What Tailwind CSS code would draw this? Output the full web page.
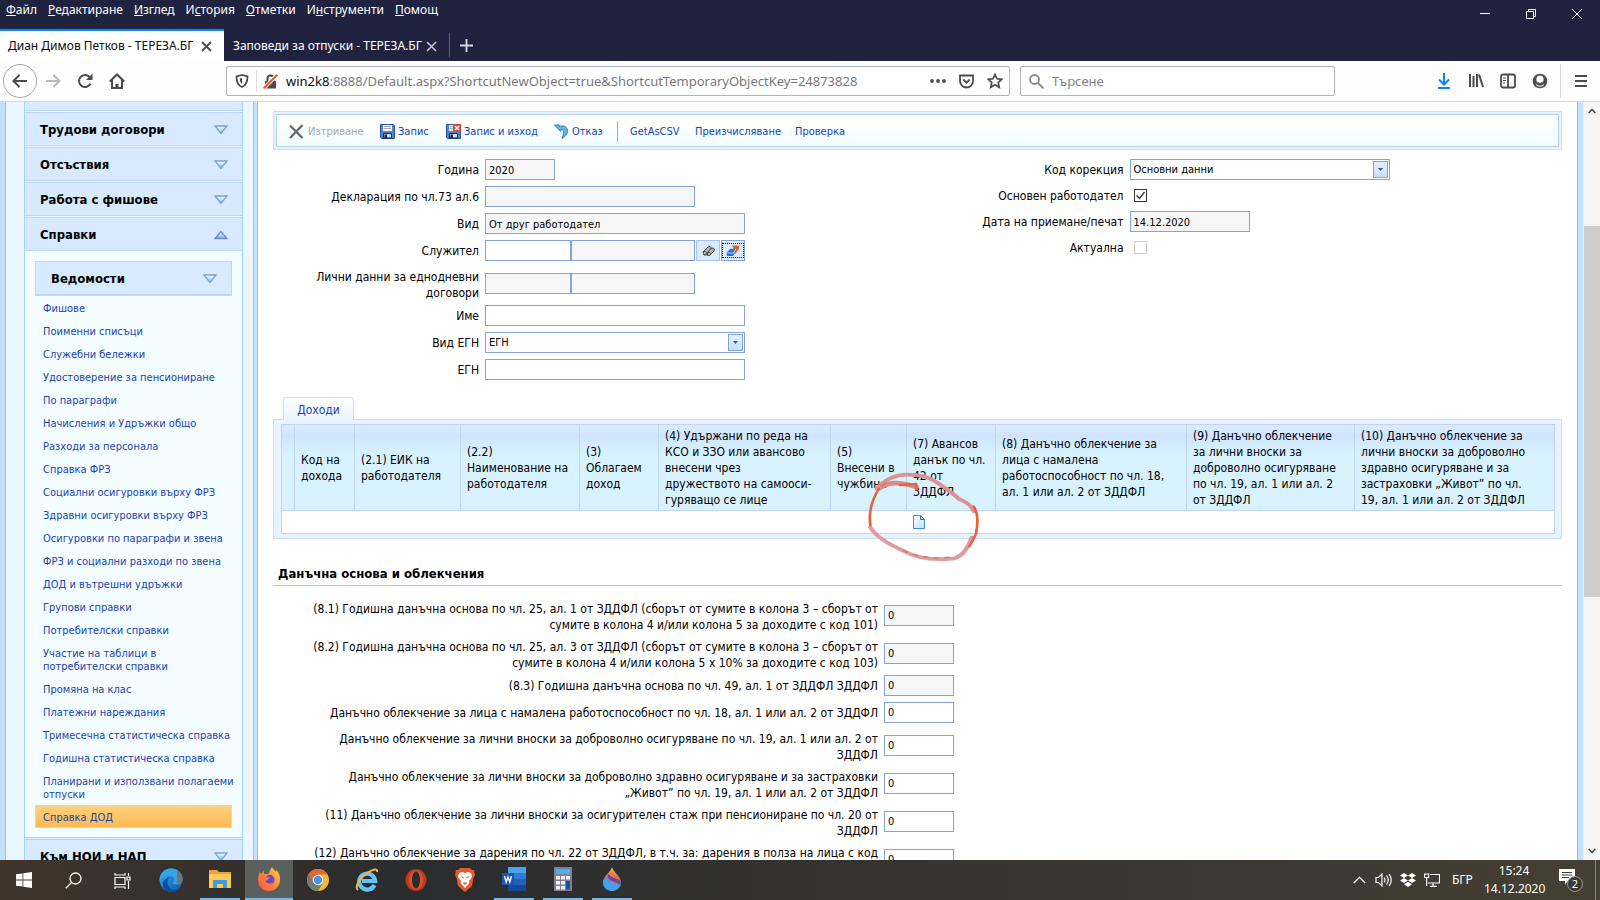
<!DOCTYPE html>
<html lang="bg">
<head>
<meta charset="utf-8">
<title>Диан Димов Петков - ТЕРЕЗА.БГ</title>
<script src="https://cdn.jsdelivr.net/npm/@tailwindcss/browser@4"></script>
</head>
<body class="flex h-screen flex-col overflow-hidden bg-white font-['DejaVu_Sans_Condensed','DejaVu_Sans',sans-serif] text-black">

<!-- Shared gradient and glyph definitions -->
<svg class="absolute size-0" aria-hidden="true">
  <defs>
    <linearGradient id="tri" x1="0" y1="0" x2="0" y2="1"><stop offset="0" stop-color="#fff"/><stop offset="1" stop-color="#6cbcf0"/></linearGradient>
    <linearGradient id="page" x1="0" y1="0" x2="1" y2="1"><stop offset="0" stop-color="#fff"/><stop offset="1" stop-color="#bfe0fa"/></linearGradient>
    <linearGradient id="edge" x1="0" y1="0" x2="1" y2="1"><stop offset="0" stop-color="#35b5ee"/><stop offset="1" stop-color="#0c50a8"/></linearGradient>
    <linearGradient id="drop" x1="0" y1="0" x2="0" y2="1"><stop offset="0" stop-color="#ffb050"/><stop offset=".5" stop-color="#e8604c"/><stop offset="1" stop-color="#d84858"/></linearGradient>
    <linearGradient id="fox" x1="1" y1="0" x2="0" y2="1"><stop offset="0" stop-color="#ffd54a"/><stop offset=".5" stop-color="#ff8a3c"/><stop offset="1" stop-color="#f0504c"/></linearGradient>
    <symbol id="down" viewBox="0 0 14 10"><path d="M1 1h12L7 8.500z" fill="url(#tri)" stroke="#7f9fd4" stroke-width="1.300"/></symbol>
    <symbol id="up" viewBox="0 0 14 10"><path d="M1 8.500h12L7 1.500z" fill="url(#tri)" stroke="#6f86c4" stroke-width="1.300"/></symbol>
    <symbol id="floppy" viewBox="0 0 15 15"><path d="M.5.5h13l1 1v13H1.500l-1-1z" fill="#4f86d0" stroke="#2c54a0"/><path d="M3 1h9v6H3z" fill="#f4f4f4"/><path d="M4 2.500h7M4 4.500h7" stroke="#a8a8b0"/><path d="M3.500 9.500h8V14h-8z" fill="#d4dcec" stroke="#223"/><path d="M4.500 10.500H7V14H4.500z" fill="#223"/></symbol>
  </defs>
</svg>

<!-- Browser chrome -->
<header class="shrink-0 font-['Noto_Sans','Open_Sans',sans-serif] text-xs">
  <div class="flex h-[61px] flex-col justify-between bg-[#202340] text-white">
    <div class="flex h-[29px] items-start justify-between">
      <nav class="flex gap-[11px] pl-[6px] pt-[1px] leading-[18px]" aria-label="Меню">
        <button><u>Ф</u>айл</button><button><u>Р</u>едактиране</button><button><u>И</u>зглед</button><button>И<u>с</u>тория</button><button><u>О</u>тметки</button><button>И<u>н</u>струменти</button><button><u>П</u>омощ</button>
      </nav>
      <div class="flex w-[138px] justify-around pt-2">
        <button aria-label="Минимизиране"><svg class="size-3" viewBox="0 0 12 12"><path d="M1 5.500h10" stroke="#fff"/></svg></button>
        <button aria-label="Възстановяване"><svg class="size-3" viewBox="0 0 12 12" fill="none" stroke="#fff"><path d="M1.500 3.500h7v7h-7zM3.500 3.500v-2h7v7h-2"/></svg></button>
        <button aria-label="Затваряне"><svg class="size-3" viewBox="0 0 12 12"><path d="M1 1l10 10M11 1L1 11" stroke="#fff"/></svg></button>
      </div>
    </div>
    <div class="flex h-8 items-center" role="tablist">
      <button role="tab" aria-selected="true" class="flex h-8 w-[224px] items-center justify-between border-t-2 border-[#0a84ff] bg-white pl-2 pr-3 text-[#0c0c0d]">Диан Димов Петков - ТЕРЕЗА.БГ
        <svg class="size-[11px]" viewBox="0 0 11 11"><path d="M1 1l9 9M10 1L1 10" stroke="#4a4a4f" stroke-width="1.800"/></svg></button>
      <button role="tab" aria-selected="false" class="flex h-8 w-[225px] items-center justify-between border-t-2 border-transparent pl-[9px] pr-3">Заповеди за отпуски - ТЕРЕЗА.БГ
        <svg class="size-[11px]" viewBox="0 0 11 11"><path d="M1 1l9 9M10 1L1 10" stroke="#c4c4cc" stroke-width="1.600"/></svg></button>
      <div class="h-6 w-px bg-[#5d5f74]"></div>
      <button class="pl-[9px]" aria-label="Нов раздел"><svg class="size-[15px]" viewBox="0 0 15 15"><path d="M7.500 1v13M1 7.500h13" stroke="#d8d8e0" stroke-width="1.800"/></svg></button>
    </div>
  </div>
  <div class="flex h-[41px] items-center border-b border-[#d8d8dc] bg-[#fdfdfd] text-[#4a4a4f]">
    <div class="flex w-[226px] items-center pl-[3px]">
      <button aria-label="Назад" class="flex size-[34px] items-center justify-center rounded-full border border-[#a8a8ac]"><svg class="size-4" viewBox="0 0 16 16" fill="none" stroke="currentColor" stroke-width="2"><path d="M15 8H2M7.500 2L1.500 8l6 6"/></svg></button>
      <button aria-label="Напред" class="ml-2"><svg class="size-4" viewBox="0 0 16 16" fill="none" stroke="#b8b8bb" stroke-width="2"><path d="M1 8h13M8.500 2l6 6-6 6"/></svg></button>
      <button aria-label="Презареждане" class="ml-4"><svg class="size-4" viewBox="0 0 16 16" fill="none" stroke="currentColor" stroke-width="2"><path d="M13.500 10.500A6 6 0 1 1 12.500 4L14 6"/><path d="M15.500.5v6.500H9z" fill="currentColor" stroke="none"/></svg></button>
      <button aria-label="Начало" class="ml-4"><svg class="size-4" viewBox="0 0 16 16" fill="none" stroke="currentColor" stroke-width="2"><path d="M.8 8.500L8 1.500l7.200 7M3 7v8h10V7"/><path d="M8 15v-4" stroke-width="3"/></svg></button>
    </div>
    <div class="flex h-[30px] min-w-0 basis-[784px] items-center rounded-[2px] border border-[#b4b4b8] bg-white pl-2 pr-[6px]">
      <svg class="size-[14px] shrink-0" viewBox="0 0 14 14" fill="none" stroke="currentColor"><path d="M7 1L1.500 2.500C1.500 8 3 11.500 7 13c4-1.500 5.500-5 5.500-10.500z" stroke-width="1.800"/><path d="M7 4v6C5.500 9 4.700 7 4.700 4.500z" fill="currentColor" stroke="none"/></svg>
      <div class="ml-[7px] h-[22px] w-px bg-[#dedee2]"></div>
      <svg class="ml-[6px] size-[15px] shrink-0" viewBox="0 0 15 15"><path d="M2 7h11v7.500H2z" fill="#4a4a4f"/><path d="M4.500 7V4.500a3 3 0 0 1 6 0V7" fill="none" stroke="#4a4a4f" stroke-width="2"/><path d="M1 14L14 1" stroke="#fff" stroke-width="4"/><path d="M.7 14.300L14.300.7" stroke="#e0582c" stroke-width="2"/></svg>
      <div class="relative ml-2 min-w-0 flex-1 pt-px text-[13px]">
        <input aria-label="Адрес" class="w-full bg-transparent text-[#78787c] outline-none" value="win2k8:8888/Default.aspx?ShortcutNewObject=true&amp;ShortcutTemporaryObjectKey=24873828">
        <span class="pointer-events-none absolute left-0 top-px bg-white text-[#0c0c0d]" aria-hidden="true">win2k8</span>
      </div>
      <div class="flex items-center gap-[13px]">
        <svg class="h-1 w-4" viewBox="0 0 16 4" fill="currentColor"><circle cx="2" cy="2" r="1.900"/><circle cx="8" cy="2" r="1.900"/><circle cx="14" cy="2" r="1.900"/></svg>
        <svg class="size-[15px]" viewBox="0 0 15 15" fill="none" stroke="currentColor" stroke-width="1.800"><path d="M1 1.500h13V7a6.500 6.500 0 0 1-13 0z"/><path d="M4.300 5.500l3.200 3.200 3.200-3.200"/></svg>
        <svg class="size-4" viewBox="0 0 16 16" fill="none" stroke="currentColor" stroke-width="1.700"><path d="M8 1.500l2 4.300 4.700.5-3.500 3.200 1 4.700L8 11.800l-4.200 2.400 1-4.700L1.300 6.300 6 5.800z"/></svg>
      </div>
    </div>
    <div class="ml-[10px] flex h-[30px] basis-[315px] items-center gap-2 rounded-[2px] border border-[#b4b4b8] bg-white px-2">
      <svg class="size-[15px] shrink-0" viewBox="0 0 15 15" fill="none" stroke="#8f828c" stroke-width="1.800"><circle cx="5.500" cy="5.500" r="4.500"/><path d="M9 9l5.500 5.500"/></svg>
      <input aria-label="Търсене" placeholder="Търсене" class="min-w-0 flex-1 pt-px text-[13px] outline-none placeholder:text-[#808084]">
    </div>
    <div class="ml-auto flex h-full items-center gap-4 pr-[13px]">
      <button aria-label="Изтегляния"><svg class="size-4" viewBox="0 0 16 16" fill="none" stroke="#0a84ff" stroke-width="2"><path d="M8 0v11M3 6.500l5 5 5-5M2 15h12"/></svg></button>
      <button aria-label="Библиотека"><svg class="size-4" viewBox="0 0 16 16" fill="none" stroke="currentColor" stroke-width="2"><path d="M2 1v13M5.500 3v11M9 1v13M11 1.500L15 14"/></svg></button>
      <button aria-label="Странични панели"><svg class="size-4" viewBox="0 0 16 16" fill="none" stroke="currentColor" stroke-width="1.800"><rect x="1" y="1.500" width="14" height="13" rx="2"/><path d="M8 2v12"/><path d="M3 5h3M3 7.500h3M3 10h2" stroke-width="1"/></svg></button>
      <button aria-label="Профил"><svg class="size-4" viewBox="0 0 16 16"><circle cx="8" cy="8" r="7.300" fill="currentColor"/><ellipse cx="8" cy="6.500" rx="3.600" ry="4" fill="#fdfdfd"/><path d="M3.600 10.500q4.400 4.500 8.800 0l-1.200 2.200q-3.200 2-6.400 0z" fill="#fdfdfd"/><path d="M5.500 9.300q2.500 2.400 5 0" fill="none" stroke="currentColor"/></svg></button>
      <div class="-ml-1 -mr-[2px] h-[34px] w-px bg-[#d8d8dc]"></div>
      <button aria-label="Меню"><svg class="h-4 w-3" viewBox="0 0 12 16" stroke="currentColor" stroke-width="2"><path d="M0 3h12M0 8h12M0 13h12"/></svg></button>
    </div>
  </div>
</header>

<div class="flex min-h-0 flex-1 overflow-hidden">
  <!-- Sidebar -->
  <aside class="flex w-[253px] shrink-0 border-l-[5px] border-[#c2e0ff] bg-[#ecf6ff] text-[11px]">
    <div class="w-px shrink-0 bg-[#9cc0e6]"></div>
    <nav class="ml-[18px] w-[219px] shrink-0 border-x border-[#a3d3ff] bg-[#e8f4ff]" aria-label="Навигация">
      <div class="h-[9px] border-b border-[#bdd7f5] bg-[#d7eaff]"></div>
      <div class="flex flex-col gap-px pt-px font-bold">
        <button class="flex h-[34px] items-center justify-between border-y border-[#bdd7f5] bg-[#d7eaff] pl-[15px] pr-[14px] pt-px text-[13px]">Трудови договори<svg class="h-[10px] w-[14px]"><use href="#down"/></svg></button>
        <button class="flex h-[34px] items-center justify-between border-y border-[#bdd7f5] bg-[#d7eaff] pl-[15px] pr-[14px] pt-px text-[13px]">Отсъствия<svg class="h-[10px] w-[14px]"><use href="#down"/></svg></button>
        <button class="flex h-[34px] items-center justify-between border-y border-[#bdd7f5] bg-[#d7eaff] pl-[15px] pr-[14px] pt-px text-[13px]">Работа с фишове<svg class="h-[10px] w-[14px]"><use href="#down"/></svg></button>
        <button aria-expanded="true" class="flex h-[34px] items-center justify-between border-y border-[#bdd7f5] bg-[#d7eaff] pl-[15px] pr-[14px] pt-px text-[13px]">Справки<svg class="h-[10px] w-[14px]"><use href="#up"/></svg></button>
      </div>
      <div class="border-b border-[#a3d3ff] bg-[#f3fcff] px-[10px] pb-[9px] pt-[10px]">
        <button class="flex h-[35px] w-full items-center justify-between border border-b-2 border-[#bdd7f5] bg-[#d7eaff] pl-[15px] pr-[14px] pt-px text-[13px] font-bold">Ведомости<svg class="h-[10px] w-[14px]"><use href="#down"/></svg></button>
        <ul class="whitespace-nowrap leading-[13px] text-[#1c44ac]">
          <li class="px-2 pb-1 pt-[6px]"><a href="#">Фишове</a></li>
          <li class="px-2 pb-1 pt-[6px]"><a href="#">Поименни списъци</a></li>
          <li class="px-2 pb-1 pt-[6px]"><a href="#">Служебни бележки</a></li>
          <li class="px-2 pb-1 pt-[6px]"><a href="#">Удостоверение за пенсиониране</a></li>
          <li class="px-2 pb-1 pt-[6px]"><a href="#">По параграфи</a></li>
          <li class="px-2 pb-1 pt-[6px]"><a href="#">Начисления и Удръжки общо</a></li>
          <li class="px-2 pb-1 pt-[6px]"><a href="#">Разходи за персонала</a></li>
          <li class="px-2 pb-1 pt-[6px]"><a href="#">Справка ФРЗ</a></li>
          <li class="px-2 pb-1 pt-[6px]"><a href="#">Социални осигуровки върху ФРЗ</a></li>
          <li class="px-2 pb-1 pt-[6px]"><a href="#">Здравни осигуровки върху ФРЗ</a></li>
          <li class="px-2 pb-1 pt-[6px]"><a href="#">Осигуровки по параграфи и звена</a></li>
          <li class="px-2 pb-1 pt-[6px]"><a href="#">ФРЗ и социални разходи по звена</a></li>
          <li class="px-2 pb-1 pt-[6px]"><a href="#">ДОД и вътрешни удръжки</a></li>
          <li class="px-2 pb-1 pt-[6px]"><a href="#">Групови справки</a></li>
          <li class="px-2 pb-1 pt-[6px]"><a href="#">Потребителски справки</a></li>
          <li class="px-2 pb-1 pt-[6px]"><a href="#">Участие на таблици в<br>потребителски справки</a></li>
          <li class="px-2 pb-1 pt-[6px]"><a href="#">Промяна на клас</a></li>
          <li class="px-2 pb-1 pt-[6px]"><a href="#">Платежни нареждания</a></li>
          <li class="px-2 pb-1 pt-[6px]"><a href="#">Тримесечна статистическа справка</a></li>
          <li class="px-2 pb-1 pt-[6px]"><a href="#">Годишна статистическа справка</a></li>
          <li class="px-2 pb-1 pt-[6px]"><a href="#">Планирани и използвани полагаеми<br>отпуски</a></li>
          <li class="border border-[#f3d58c] bg-linear-to-b from-[#fcd080] to-[#ffb950] px-[7px] pb-[3px] pt-[5px]"><a href="#">Справка ДОД</a></li>
        </ul>
      </div>
      <button class="mt-px flex h-[34px] w-full items-center justify-between border-y border-[#a3d3ff] bg-[#d7eaff] pl-[15px] pr-[14px] pt-px text-[13px] font-bold">Към НОИ и НАП<svg class="h-[10px] w-[14px]"><use href="#down"/></svg></button>
    </nav>
  </aside>
  <div class="w-[5px] shrink-0 border-x border-[#9cc0e6] bg-[#c2e0ff]"></div>

  <!-- Form -->
  <main class="min-w-0 flex-1 pl-[15px] pr-[15px] pt-[9px] text-xs leading-4">
    <div class="border border-[#cfdff2] bg-[#e9f3ff] p-[2px]">
      <div class="flex h-[33px] items-center border border-[#b3d0f5] bg-linear-to-b from-white to-[#f2fdff] pl-3 pt-[2px] text-[11px] text-[#1c44ac]" role="toolbar">
        <button disabled class="flex w-[91px] items-center gap-1 text-[#a8a8a8]"><svg class="size-[15px]" viewBox="0 0 15 15"><path d="M1 1.500L13.500 14M13.500 1L1 14" stroke="#6b6b70" stroke-width="2.400"/></svg>Изтриване</button>
        <button class="flex w-[66px] items-center gap-[3px]"><svg class="size-[15px]"><use href="#floppy"/></svg>Запис</button>
        <button class="flex w-[108px] items-center gap-[3px]"><svg class="size-[15px]" viewBox="0 0 15 15"><use href="#floppy"/><rect x="7" width="8" height="8" fill="#d8482c"/><path d="M9 2l4 4M13 2L9 6" stroke="#fff" stroke-width="1.600"/></svg>Запис и изход</button>
        <button class="flex w-[63px] items-center gap-[3px]"><svg class="size-[15px]" viewBox="0 0 15 15"><path d="M.5 1l6 6.500L7 5.500c2 0 3 1.500 2.500 4L8 14.500c4-2 6-5.500 5.500-8.500C12.500 2 9 1 5.500 2.500L5 .8z" fill="#62b4ec" stroke="#2c68b4" stroke-width=".8"/></svg>Отказ</button>
        <span class="h-[21px] w-px bg-[#8fb2dc]"></span>
        <button class="ml-3 w-[65px] text-left">GetAsCSV</button>
        <button class="w-[100px] text-left">Преизчисляване</button>
        <button>Проверка</button>
      </div>
    </div>

    <div class="mt-[6px] grid grid-cols-2 items-start">
      <div>
        <div class="flex items-center gap-[6px] py-[3px]"><label for="f1" class="w-[206px] text-right">Година</label><input id="f1" readonly value="2020" class="h-[21px] w-[70px] border border-[#83a4d8] bg-[#f6f6f6] px-[3px] pt-px text-[11px]"></div>
        <div class="flex items-center gap-[6px] py-[3px]"><label for="f2" class="w-[206px] text-right">Декларация по чл.73 ал.6</label><input id="f2" readonly class="h-[21px] w-[210px] border border-[#83a4d8] bg-[#f6f6f6] px-[3px] text-[11px]"></div>
        <div class="flex items-center gap-[6px] py-[3px]"><label for="f3" class="w-[206px] text-right">Вид</label><input id="f3" readonly value="От друг работодател" class="h-[21px] w-[260px] border border-[#83a4d8] bg-[#f6f6f6] px-[3px] pt-px text-[11px]"></div>
        <div class="flex items-center gap-[6px] py-[3px]"><label for="f4" class="w-[206px] text-right">Служител</label>
          <div class="flex w-[260px]">
            <input id="f4" class="h-[21px] w-[86px] border border-[#83a4d8] px-[3px] text-[11px]"><input aria-label="Име на служител" readonly class="h-[21px] min-w-0 flex-1 border border-[#83a4d8] bg-[#f6f6f6] px-[3px] text-[11px]">
            <button aria-label="Търсене" class="ml-px flex h-[21px] w-6 items-center justify-center border border-[#a5c4ee] bg-[#dbebff]"><svg class="size-[13px]" viewBox="0 0 13 13" stroke="#444" fill="#b4b4b8"><path d="M1 8l5-5 2-.5 1 1-.5 2-4 5.500L2 11z"/><path d="M5 9l4-4.500 2-.5 1.500 1-.5 2-4 4-2.500.5z"/><circle cx="3" cy="9" r="1.500" fill="#e8e8ea"/><circle cx="7" cy="10" r="1.500" fill="#e8e8ea"/></svg></button>
            <button aria-label="Изчистване" class="ml-px flex h-[21px] w-6 items-center justify-center border border-[#83a4d8] bg-[#dbebff]"><span class="flex h-[15px] w-[22px] items-center justify-center border border-dotted border-black"><svg class="h-3 w-[14px]" viewBox="0 0 14 12"><path d="M6 .5h7.500L12.500 5 9 9l-1-5z" fill="#e0602c"/><path d="M4 4l5-.5 1 2.500-3 5H1L.5 8z" fill="#2f6fc8"/><path d="M1.500 8h6l2.500-4" stroke="#9cd0ff" fill="none" stroke-width="1.200"/></svg></span></button>
          </div>
        </div>
        <div class="flex items-center gap-[6px] py-[3px]"><label for="f5" class="h-8 w-[206px] pt-[2px] text-right">Лични данни за еднодневни<br>договори</label>
          <div class="flex w-[210px]"><input id="f5" readonly class="h-[21px] w-[86px] border border-[#83a4d8] bg-[#f6f6f6] px-[3px] text-[11px]"><input aria-label="Лични данни" readonly class="h-[21px] min-w-0 flex-1 border border-[#83a4d8] bg-[#f6f6f6] px-[3px] text-[11px]"></div>
        </div>
        <div class="flex items-center gap-[6px] py-[3px]"><label for="f6" class="w-[206px] text-right">Име</label><input id="f6" class="h-[21px] w-[260px] border border-[#83a4d8] px-[3px] text-[11px]"></div>
        <div class="flex items-center gap-[6px] py-[3px]"><label for="f7" class="w-[206px] text-right">Вид ЕГН</label>
          <div class="relative w-[260px]"><select id="f7" class="block h-[21px] w-full appearance-none border border-[#83a4d8] bg-white px-[3px] pt-px text-[11px]"><option>ЕГН</option></select><span class="pointer-events-none absolute right-[2px] top-[2px] flex h-[17px] w-[15px] items-center justify-center border border-[#83a4d8] bg-linear-to-b from-[#e4f1ff] to-[#c6dfff]"><svg class="h-[3px] w-[5px]" viewBox="0 0 5 3"><path d="M0 0h5L2.500 3z" fill="#4a4ab0"/></svg></span></div>
        </div>
        <div class="flex items-center gap-[6px] py-[3px]"><label for="f8" class="w-[206px] text-right">ЕГН</label><input id="f8" class="h-[21px] w-[260px] border border-[#83a4d8] px-[3px] text-[11px]"></div>
      </div>
      <div>
        <div class="flex items-center gap-[6px] py-[3px]"><label for="g1" class="w-[206px] text-right">Код корекция</label>
          <div class="relative w-[260px]"><select id="g1" class="block h-[21px] w-full appearance-none border border-[#83a4d8] bg-white px-[3px] pt-px text-[11px]"><option>Основни данни</option></select><span class="pointer-events-none absolute right-[2px] top-[2px] flex h-[17px] w-[15px] items-center justify-center border border-[#83a4d8] bg-linear-to-b from-[#e4f1ff] to-[#c6dfff]"><svg class="h-[3px] w-[5px]" viewBox="0 0 5 3"><path d="M0 0h5L2.500 3z" fill="#4a4ab0"/></svg></span></div>
        </div>
        <div class="flex h-[25px] items-center gap-[10px]"><label for="g2" class="w-[206px] text-right">Основен работодател</label>
          <span class="relative flex size-[13px]"><input id="g2" type="checkbox" checked class="size-[13px] appearance-none border border-[#333] bg-white"><svg class="pointer-events-none absolute inset-0 size-[13px]" viewBox="0 0 13 13"><path d="M2.500 6.500l3 3 5-6.500" fill="none" stroke="#333" stroke-width="1.300"/></svg></span></div>
        <div class="flex items-center gap-[6px] py-[3px]"><label for="g3" class="w-[206px] text-right">Дата на приемане/печат</label><input id="g3" readonly value="14.12.2020" class="h-[21px] w-[120px] border border-[#83a4d8] bg-[#f6f6f6] px-[3px] pt-px text-[11px]"></div>
        <div class="flex h-[25px] items-center gap-[10px]"><label for="g4" class="w-[206px] text-right">Актуална</label><input id="g4" type="checkbox" disabled class="size-[13px] appearance-none border border-[#ccc] bg-white"></div>
      </div>
    </div>

    <!-- Income grid -->
    <div class="mt-[14px]">
      <div class="pl-[10px]" role="tablist"><button role="tab" aria-selected="true" class="relative z-10 -mb-px block h-[23px] w-[71px] rounded-t-[3px] border border-b-0 border-[#cfdff2] bg-linear-to-b from-white to-[#eaf4ff] pt-px text-[#1c44ac]">Доходи</button></div>
      <div class="relative border border-[#cfdff2] bg-[#e9f3ff] px-[7px] pb-1 pt-1">
        <table class="w-full table-fixed border-collapse bg-white">
          <colgroup><col class="w-[13px]"><col class="w-[60px]"><col class="w-[106px]"><col class="w-[119px]"><col class="w-[79px]"><col class="w-[172px]"><col class="w-[76px]"><col class="w-[89px]"><col class="w-[191px]"><col class="w-[168px]"><col class="w-[200px]"></colgroup>
          <thead class="whitespace-nowrap">
            <tr class="h-[86px] bg-linear-to-b from-[#d8eaff] from-5% via-[#cfe4ff] via-12% to-[#d8f3ff] to-35% text-left">
              <th class="border border-[#bfd5f0] p-0"></th>
              <th class="border border-[#bfd5f0] px-[6px] py-[2px] font-normal">Код на<br>дохода</th>
              <th class="border border-[#bfd5f0] px-[6px] py-[2px] font-normal">(2.1) ЕИК на<br>работодателя</th>
              <th class="border border-[#bfd5f0] px-[6px] py-[2px] font-normal">(2.2)<br>Наименование на<br>работодателя</th>
              <th class="border border-[#bfd5f0] px-[6px] py-[2px] font-normal">(3)<br>Облагаем<br>доход</th>
              <th class="border border-[#bfd5f0] px-[6px] py-[2px] font-normal">(4) Удържани по реда на<br>КСО и ЗЗО или авансово<br>внесени чрез<br>дружеството на самооси-<br>гуряващо се лице</th>
              <th class="border border-[#bfd5f0] px-[6px] py-[2px] font-normal">(5)<br>Внесени в<br>чужбина</th>
              <th class="border border-[#bfd5f0] px-[6px] py-[2px] font-normal">(7) Авансов<br>данък по чл.<br>42 от<br>ЗДДФЛ</th>
              <th class="border border-[#bfd5f0] px-[6px] py-[2px] font-normal">(8) Данъчно облекчение за<br>лица с намалена<br>работоспособност по чл. 18,<br>ал. 1 или ал. 2 от ЗДДФЛ</th>
              <th class="border border-[#bfd5f0] px-[6px] py-[2px] font-normal">(9) Данъчно облекчение<br>за лични вноски за<br>доброволно осигуряване<br>по чл. 19, ал. 1 или ал. 2<br>от ЗДДФЛ</th>
              <th class="border border-[#bfd5f0] px-[6px] py-[2px] font-normal">(10) Данъчно облекчение за<br>лични вноски за доброволно<br>здравно осигуряване и за<br>застраховки „Живот” по чл.<br>19, ал. 1 или ал. 2 от ЗДДФЛ</th>
            </tr>
          </thead>
          <tbody>
            <tr class="h-[23px]"><td colspan="7" class="border-b border-l border-[#bfd5f0]"></td><td class="border-b border-[#bfd5f0] px-[6px]"><button aria-label="Нов запис" class="block"><svg class="h-[14px] w-3" viewBox="0 0 12 14"><path d="M.5.5h7l4 4v9H.5z" fill="url(#page)" stroke="#3f8bd8"/><path d="M7.500.5v4h4z" fill="#fff" stroke="#2c6fc4"/></svg></button></td><td colspan="3" class="border-b border-r border-[#bfd5f0]"></td></tr>
          </tbody>
        </table>
        <!-- Hand-drawn mark round the new-record button -->
        <svg class="pointer-events-none absolute left-[591px] top-[49px] h-[94px] w-[128px]" viewBox="0 0 120 100" preserveAspectRatio="none" fill="none" stroke-linecap="round" stroke-linejoin="round">
          <path d="M11 21C18 12 28 6 40 6c12 0 21 3 27 8 8 6 15 11 21 18 8 3 12 8 14 13" stroke="#dc9490" stroke-width="4"/>
          <path d="M14 20c9-7 20-6 34-1" stroke="#dc8c88" stroke-width="5"/>
          <path d="M5 62c5 10 17 18 31 25 9 6 24 11 48 8 6-2 12-9 16-22" stroke="#dc9ca0" stroke-width="4"/>
          <path d="M13 21C7 32 3 45 5 60M102 40c4 7 4 18 2 29-2 5-4 9-6 13M33 17l15-1v6" stroke="#e4643c" stroke-width="2.500"/>
          <path d="M10 26l9-11M36 87c16 8 34 9 47 6" stroke="#d87858" stroke-width="1.500" stroke-dasharray="4 6"/>
        </svg>
      </div>
    </div>

    <h2 class="mt-[25px] border-b border-[#b2c8dc] pb-[3px] pl-[5px] pt-px text-[13px] font-bold leading-[17px]">Данъчна основа и облекчения</h2>

    <div class="pt-[10px]">
      <div class="flex items-center gap-[6px] py-[3px]"><label for="h1" class="h-8 w-[605px] whitespace-nowrap pt-[2px] text-right">(8.1) Годишна данъчна основа по чл. 25, ал. 1 от ЗДДФЛ (сборът от сумите в колона 3 – сборът от<br>сумите в колона 4 и/или колона 5 за доходите с код 101)</label><input id="h1" readonly value="0" class="h-[21px] w-[70px] border border-[#83a4d8] bg-[#f6f6f6] px-[3px] text-[11px]"></div>
      <div class="flex items-center gap-[6px] py-[3px]"><label for="h2" class="h-8 w-[605px] whitespace-nowrap pt-[2px] text-right">(8.2) Годишна данъчна основа по чл. 25, ал. 3 от ЗДДФЛ (сборът от сумите в колона 3 – сборът от<br>сумите в колона 4 и/или колона 5 x 10% за доходите с код 103)</label><input id="h2" readonly value="0" class="h-[21px] w-[70px] border border-[#83a4d8] bg-[#f6f6f6] px-[3px] text-[11px]"></div>
      <div class="flex items-center gap-[6px] py-[3px]"><label for="h3" class="w-[605px] whitespace-nowrap text-right">(8.3) Годишна данъчна основа по чл. 49, ал. 1 от ЗДДФЛ ЗДДФЛ</label><input id="h3" readonly value="0" class="h-[21px] w-[70px] border border-[#83a4d8] bg-[#f6f6f6] px-[3px] text-[11px]"></div>
      <div class="flex items-center gap-[6px] py-[3px]"><label for="h4" class="w-[605px] whitespace-nowrap text-right">Данъчно облекчение за лица с намалена работоспособност по чл. 18, ал. 1 или ал. 2 от ЗДДФЛ</label><input id="h4" value="0" class="h-[21px] w-[70px] border border-[#83a4d8] px-[3px] text-[11px]"></div>
      <div class="flex items-center gap-[6px] py-[3px]"><label for="h5" class="h-8 w-[605px] whitespace-nowrap pt-[2px] text-right">Данъчно облекчение за лични вноски за доброволно осигуряване по чл. 19, ал. 1 или ал. 2 от<br>ЗДДФЛ</label><input id="h5" value="0" class="h-[21px] w-[70px] border border-[#83a4d8] px-[3px] text-[11px]"></div>
      <div class="flex items-center gap-[6px] py-[3px]"><label for="h6" class="h-8 w-[605px] whitespace-nowrap pt-[2px] text-right">Данъчно облекчение за лични вноски за доброволно здравно осигуряване и за застраховки<br>„Живот” по чл. 19, ал. 1 или ал. 2 от ЗДДФЛ</label><input id="h6" value="0" class="h-[21px] w-[70px] border border-[#83a4d8] px-[3px] text-[11px]"></div>
      <div class="flex items-center gap-[6px] py-[3px]"><label for="h7" class="h-8 w-[605px] whitespace-nowrap pt-[2px] text-right">(11) Данъчно облекчение за лични вноски за осигурителен стаж при пенсиониране по чл. 20 от<br>ЗДДФЛ</label><input id="h7" value="0" class="h-[21px] w-[70px] border border-[#83a4d8] px-[3px] text-[11px]"></div>
      <div class="flex items-center gap-[6px] py-[3px]"><label for="h8" class="h-8 w-[605px] whitespace-nowrap pt-[2px] text-right">(12) Данъчно облекчение за дарения по чл. 22 от ЗДДФЛ, в т.ч. за: дарения в полза на лица с код</label><input id="h8" value="0" class="h-[21px] w-[70px] border border-[#83a4d8] px-[3px] text-[11px]"></div>
    </div>
  </main>
  <div class="w-[6px] shrink-0 border-l border-[#9cc0e6] bg-[#c2e0ff]"></div>
  <!-- Scroll bar -->
  <div class="flex w-[17px] shrink-0 flex-col items-center bg-[#f5f5f5] pl-px">
    <svg class="mt-[6px] h-[6px] w-2" viewBox="0 0 8 6"><path d="M.7 5L4 1.500 7.300 5" fill="none" stroke="#505050" stroke-width="1.800"/></svg>
    <div class="mt-28 h-[371px] w-full bg-[#cdcdcd]"></div>
    <svg class="mb-[6px] mt-auto h-[6px] w-2" viewBox="0 0 8 6"><path d="M.7 1L4 4.500 7.300 1" fill="none" stroke="#505050" stroke-width="1.800"/></svg>
  </div>
</div>

<!-- Task bar -->
<footer class="flex h-10 shrink-0 items-center justify-between bg-linear-to-r from-[#40352b] via-[#2b2c2e] via-25% to-[#453f33] font-['Noto_Sans','Open_Sans',sans-serif] text-xs text-white">
  <div class="flex h-full items-stretch gap-px">
    <button aria-label="Старт" class="flex w-12 items-center justify-center"><svg class="size-4" viewBox="0 0 16 16" fill="#fff"><path d="M0 2.300l6.500-.9v6.200H0zM7.300 1.300L16 0v7.600H7.300zM0 8.400h6.500v6.200L0 13.700zM7.300 8.400H16V16l-8.700-1.300z"/></svg></button>
    <button aria-label="Търсене" class="flex w-12 items-center justify-center"><svg class="size-[17px]" viewBox="0 0 17 17" fill="none" stroke="#fff" stroke-width="1.300"><circle cx="10.500" cy="6.500" r="5.500"/><path d="M6.500 10.500L.8 16.200"/></svg></button>
    <button aria-label="Изглед на задачите" class="flex w-12 items-center justify-center"><svg class="size-[17px]" viewBox="0 0 17 17" fill="none" stroke="#fff" stroke-width="1.200"><path d="M1 5.500h10v7H1zM1 1v2h10V1M1 17v-2h10v2M14.500 1v3M14.500 9v8M13 5h3v3h-3z"/></svg></button>
    <button aria-label="Edge" class="flex w-12 items-center justify-center"><svg class="size-6" viewBox="0 0 24 24"><circle cx="12" cy="12" r="11.500" fill="url(#edge)"/><path d="M12 .5c7 0 11.500 5 11.500 10.500 0 4-3 5.500-6 5.500-2.500 0-4-1-3.500-2 2.500-3 1-7-3-7C7 7.500 3 9 .6 13 .5 6 5 .5 12 .5z" fill="#38a4e8"/><path d="M18 2.500c3 1.600 5.500 5 5.500 8.500 0 4-3 5.500-6 5.500z" fill="#657882"/><path d="M11 9c-4 3-3 9 1 12 3 1.500 6 1 9-1-3 4-9 5-14 2.500C2 19 3 11 11 9z" fill="#0c4fa0"/></svg></button>
    <button aria-label="Файлове" class="flex w-12 justify-center px-1"><span class="flex w-full items-center justify-center border-b-2 border-[#76b9ed]"><svg class="h-5 w-[22px]" viewBox="0 0 22 20"><path d="M0 1h8l2 2h12v16H0z" fill="#e8a33a"/><path d="M0 5h22v14H0z" fill="#ffca5c"/><path d="M4 19v-8h14v8h-4v-4H8v4z" fill="#3f9ce0"/></svg></span></button>
    <button aria-label="Firefox" class="flex w-12 items-center justify-center border-b-2 border-[#76b9ed] bg-[#5b605f]"><svg class="size-6" viewBox="0 0 24 24"><path d="M12 24C5 24 1 19 1 13c0-4 1-6 2-8l1.500 2L7 3.500V7h4.500c1-2 1.500-4 3.500-7 1.500 3 3 3 4 5l.5-2C22 6 23.500 9 23 14c-1 6-5 10-11 10z" fill="url(#fox)"/><circle cx="12.500" cy="13" r="5" fill="#6a48c8"/><path d="M5 8.500c3 0 4 1.500 8 2-1 2-3 2-4.500 4 2 2.500 5 2.500 8 1-2 4-10 4.500-12.500-1z" fill="#ff7838"/></svg></button>
    <button aria-label="Chrome" class="flex w-12 items-center justify-center"><svg class="size-[22px]" viewBox="0 0 22 22"><circle cx="11" cy="11" r="11" fill="#f0b83c"/><path d="M11 11L1.500 5.500A11 11 0 0 0 11 22l4.800-8.300z" fill="#707b78"/><path d="M1.500 5.500A11 11 0 0 1 20.500 5.500H11L6.200 13.700z" fill="#e0683c"/><circle cx="11" cy="11" r="5.300" fill="#fff"/><circle cx="11" cy="11" r="4.200" fill="#4a94e8"/></svg></button>
    <button aria-label="Internet Explorer" class="flex w-12 items-center justify-center"><svg class="size-6" viewBox="0 0 24 24" fill="none"><path d="M19.500 17a8 8 0 1 1 .7-4H7" stroke="#62c4f8" stroke-width="4.200"/><path d="M3 22C-1 19 5 10 12 5c6-4 11-5 10-1" stroke="#f0b83c" stroke-width="2"/></svg></button>
    <button aria-label="Opera" class="flex w-12 items-center justify-center"><svg class="size-[22px]" viewBox="0 0 22 22"><ellipse cx="11" cy="11" rx="10.500" ry="11" fill="#bc381c"/><ellipse cx="11" cy="11" rx="7.500" ry="9.500" fill="#d85030"/><ellipse cx="11" cy="11" rx="4" ry="8.500" fill="#2c2c2e"/></svg></button>
    <button aria-label="Brave" class="flex w-12 items-center justify-center"><svg class="h-6 w-5" viewBox="0 0 20 24"><path d="M5 0h10l2 2h2l1 5-1.500 3-1.500 8-7 6-7-6-1.500-8L0 7l1-5h2z" fill="#e8582c"/><path d="M4 5l3-1 3 1 3-1 3 1 1 4-3 4 .5 2-4.500 5-4.500-5 .5-2-3-4z" fill="#fff"/><path d="M5.500 8l3 1v2zM14.500 8l-3 1v2zM7.500 14.500h5L10 17z" fill="#e8582c"/></svg></button>
    <button aria-label="Word" class="flex w-12 justify-center px-1"><span class="flex w-full items-center justify-center border-b-2 border-[#76b9ed]"><svg class="size-6" viewBox="0 0 24 24"><path d="M6 0h18v6H6z" fill="#4aa4ec"/><path d="M6 6h18v6H6z" fill="#2f7cd8"/><path d="M6 12h18v6H6z" fill="#2260bc"/><path d="M6 18h18v6H6z" fill="#184898"/><path d="M0 6h12v12H0z" fill="#1c56b0"/><path d="M2.500 9l1.700 6L6 10l1.800 5 1.700-6" fill="none" stroke="#fff" stroke-width="1.400"/></svg></span></button>
    <button aria-label="Калкулатор" class="flex w-12 justify-center px-1"><span class="flex w-full items-center justify-center border-b-2 border-[#76b9ed]"><svg class="h-6 w-[18px]" viewBox="0 0 18 24"><path d="M0 0h18v24H0z" fill="#80808c"/><path d="M2 2h14v5H2z" fill="#4cb0f4"/><path d="M2 9h4v3.500H2zM7 9h4v3.500H7zM12 9h4v3.500h-4zM2 14h4v3.500H2zM7 14h4v3.500H7zM2 19h4v3.500H2zM7 19h4v3.500H7z" fill="#f0f0f4"/><path d="M12 14h4v8.500h-4z" fill="#1a4ea4"/></svg></span></button>
    <button aria-label="Rainmeter" class="flex w-12 justify-center px-1"><span class="flex w-full items-center justify-center border-b-2 border-[#76b9ed]"><svg class="h-6 w-[18px]" viewBox="0 0 18 24"><path d="M9 0c1 5 9 9 9 15.500A9 8.500 0 0 1 0 15.500C0 9 8 5 9 0z" fill="url(#drop)"/><path d="M3 9.500c1 4 5 5 8 6.500 3 1.500 6 1 7-1 0 5-4 9-9 9s-9-4-9-8.500C0 13 1.500 11.500 3 9.500z" fill="#3ca4f0"/><path d="M4.500 8c0 6 8 6 13 10l.5-3C15 11 9 12 5.500 7z" fill="#5848b0"/></svg></span></button>
  </div>
  <div class="flex h-full items-center">
    <svg class="mr-[9px] h-2 w-[13px]" viewBox="0 0 13 8"><path d="M.8 7l5.700-5.700L12.200 7" fill="none" stroke="#fff" stroke-width="1.300"/></svg>
    <svg class="mr-2 h-[14px] w-[17px]" viewBox="0 0 17 14" fill="none" stroke="#fff" stroke-width="1.200"><path d="M1 4.500h2.500L7 1v12L3.500 9.500H1zM9 4.500q2 2.500 0 5M11.500 2.500q3.500 4.500 0 9M14 1q4.500 6 0 12"/></svg>
    <svg class="mr-2 h-[14px] w-4" viewBox="0 0 16 14" fill="#fff"><path d="M4 0l4 2.500L4 5 0 2.500zM12 0l4 2.500L12 5 8 2.500zM4 5l4 2.500L4 10 0 7.500zM12 5l4 2.500L12 10 8 7.500zM8 8.700l4 2.500L8 14l-4-2.800z"/></svg>
    <svg class="mr-3 h-[14px] w-4" viewBox="0 0 16 14" fill="none" stroke="#fff" stroke-width="1.200"><path d="M6 1.500h9.500v8.500H4M9 10v3M6 13.400h7M.6 1h4v3.500h-4zM2.600 4.500V13"/></svg>
    <span class="w-[32px]">БГР</span>
    <time class="w-[60px] text-center text-xs leading-[18px]">15:24<br>14.12.2020</time>
    <span class="relative ml-[15px] mr-3 h-6 w-[24px]">
      <svg class="h-[17px] w-[17px]" viewBox="0 0 17 17"><path d="M0 1h16v12H9l-3 3.500V13H0z" fill="#fff"/><path d="M3 4.500h10M3 7h10M3 9.500h7" stroke="#453f33"/></svg>
      <span class="absolute bottom-0 right-0 flex size-4 items-center justify-center rounded-full border border-[#999] bg-[#3b3832] text-[11px]">2</span>
    </span>
    <div class="mr-1 h-full w-px bg-[#8a867e]"></div>
  </div>
</footer>
</body>
</html>
